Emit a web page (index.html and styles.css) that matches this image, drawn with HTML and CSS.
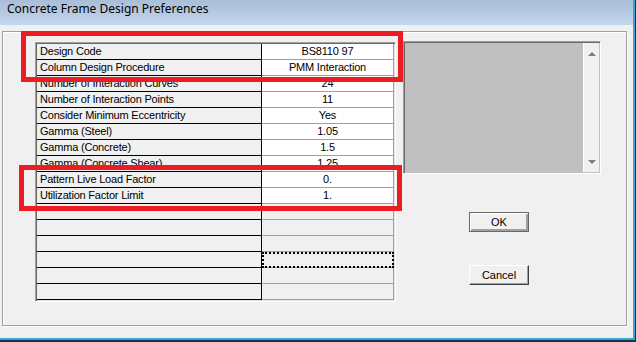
FILE: index.html
```html
<!DOCTYPE html>
<html lang="en">
<head>
  <meta charset="UTF-8">
  <title>Concrete Frame Design Preferences</title>
  <link rel="stylesheet" href="styles.css">
</head>
<body>

  <div class="window">
    <div class="titlebar">Concrete Frame Design Preferences</div>

    <div class="client">
      <div class="frame">

        <!-- Preference grid -->
        <div class="grid">
          <div class="label">Design Code</div><div class="value">BS8110 97</div>
          <div class="label">Column Design Procedure</div><div class="value">PMM Interaction</div>
          <div class="label">Number of Interaction Curves</div><div class="value">24</div>
          <div class="label">Number of Interaction Points</div><div class="value">11</div>
          <div class="label">Consider Minimum Eccentricity</div><div class="value">Yes</div>
          <div class="label">Gamma (Steel)</div><div class="value">1.05</div>
          <div class="label">Gamma (Concrete)</div><div class="value">1.5</div>
          <div class="label">Gamma (Concrete Shear)</div><div class="value">1.25</div>
          <div class="label">Pattern Live Load Factor</div><div class="value">0.</div>
          <div class="label">Utilization Factor Limit</div><div class="value">1.</div>
          <div class="label"></div><div class="value empty"></div>
          <div class="label"></div><div class="value empty"></div>
          <div class="label"></div><div class="value empty"></div>
          <div class="label"></div><div class="value empty focus"></div>
          <div class="label"></div><div class="value empty"></div>
          <div class="label"></div><div class="value empty"></div>
        </div>

        <div class="side">
          <div class="preview">
            <div class="scrollbar">
              <span class="arrow up"></span>
              <span class="arrow down"></span>
            </div>
          </div>
          <div class="buttons">
            <button class="btn default">OK</button>
            <button class="btn">Cancel</button>
          </div>
        </div>

      </div>
    </div>

    <!-- red highlight marks -->
    <div class="mark mark-top"></div>
    <div class="mark mark-bottom"></div>
  </div>

</body>
</html>
```

FILE: styles.css
```css
* { margin: 0; padding: 0; box-sizing: border-box; }
body { background: #1c3140; width: 636px; height: 342px; overflow: hidden; }

/* Window */
.window {
  position: relative; width: 635px; height: 340px;
  background: #f0f0f0;
  border-right: 2px solid #3aa3dc; border-bottom: 2px solid #3aa3dc;
}
.titlebar {
  height: 25px; line-height: 25px; padding-left: 7px;
  background: linear-gradient(#a9bed7, #c2d6ec);
  font: 12px "Noto Sans", "DejaVu Sans", sans-serif; color: #000;
}
.client { padding: 6px 0 0 2px; }
.frame {
  display: flex; width: 625px; height: 295px;
  border: 1px solid #a0a0a0;
  box-shadow: 1px 1px 0 #fff, inset 1px 1px 0 #fff;
  padding: 10px 0 0 32px;
}

/* Grid */
.grid {
  display: grid; grid-template-columns: 225px 132px; grid-auto-rows: 16px;
  width: 361px; height: 260px; padding: 1px;
  border: 1px solid; border-color: #a0a0a0 #fff #fff #a0a0a0;
  box-shadow: inset 1px 1px 0 #696969, inset -1px -1px 0 #e3e3e3;
  font: 11px "Liberation Sans", Arial, sans-serif; letter-spacing: -0.2px;
  line-height: 15px; color: #000;
}
.label {
  background: #f0f0f0; padding-left: 3px; white-space: nowrap; overflow: hidden;
  border-right: 1px solid #000; border-bottom: 1px solid #000;
}
.value {
  background: #fff; text-align: center;
  border-right: 1px solid #a0a0a0; border-bottom: 1px solid #a0a0a0;
}
.value.empty { background: #f0f0f0; }
.value.focus { outline: 2px dotted #000; outline-offset: -2px; }

/* Right side */
.side { margin: -1px 0 0 7px; }
.preview {
  display: flex; justify-content: flex-end;
  width: 198px; height: 133px; padding: 1px;
  background: #c0c0c0;
  border: 1px solid; border-color: #a0a0a0 #fff #fff #a0a0a0;
  box-shadow: inset 1px 1px 0 #696969;
}
.scrollbar {
  display: flex; flex-direction: column; justify-content: space-between; align-items: center;
  width: 16px; padding: 9px 0 8px;
  background: #f0f0f0; border-left: 1px solid #fff;
}
.arrow { width: 0; height: 0; border-left: 4px solid transparent; border-right: 4px solid transparent; }
.arrow.up { border-bottom: 4px solid #7a7a7a; }
.arrow.down { border-top: 4px solid #7a7a7a; }

.buttons { display: flex; flex-direction: column; gap: 33px; margin: 38px 0 0 66px; }
.btn {
  width: 60px; height: 20px; background: #f0f0f0;
  border: 1px solid; border-color: #fff #404040 #404040 #fff;
  box-shadow: inset -1px -1px 0 #a0a0a0;
  font: 11px "Liberation Sans", Arial, sans-serif; color: #000;
}
.btn.default {
  border-color: #696969;
  box-shadow: inset 1px 1px 0 #fff, inset -2px -2px 0 #a0a0a0;
}

/* Red highlight marks */
.mark { position: absolute; border: 5px solid #ed1c24; }
.mark-top { left: 21px; top: 31px; width: 382px; height: 51px; }
.mark-bottom { left: 19px; top: 165px; width: 383px; height: 46px; }
```
